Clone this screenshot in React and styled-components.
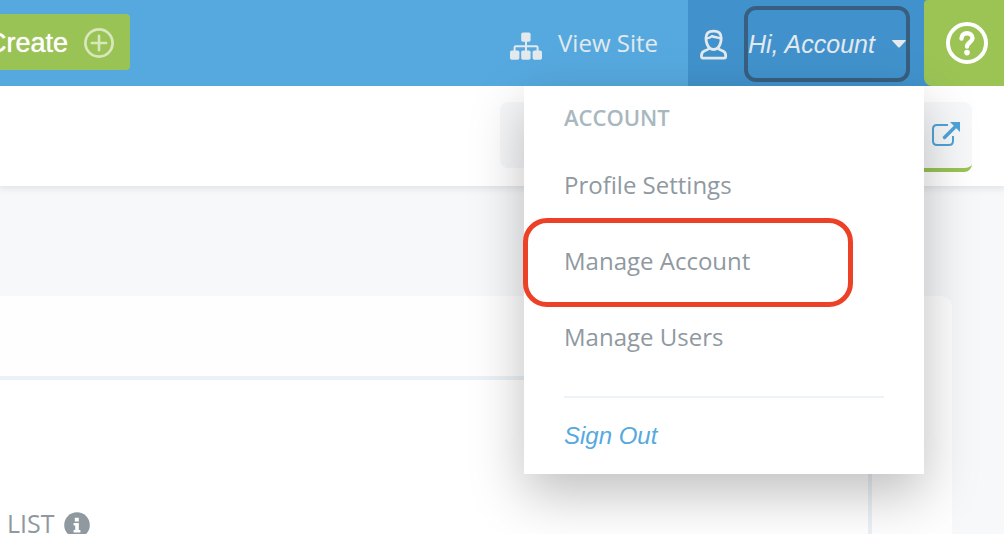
import styled from "styled-components";
import { createGlobalStyle } from "styled-components";


const GlobalStyle = createGlobalStyle`
   * {
    box-sizing: border-box;
   }

   body {
   background: #F7F8FA;
   margin: 0;
   overflow: hidden;
   font-family: 'Open Sans', sans-serif;
   font-size: 24px;
   color: #8F999F;
   }

   button {
   border: none;
   cursor: pointer;
   font: inherit;
   }

   a {
   text-decoration: none;
   color: inherit;
   }

   svg {
   display: block;
   flex: none;
   }
`;

const Page = styled.div`
   display: flex;
   flex-direction: column;
   height: 100vh;
`;

const Header = styled.header`
   display: flex;
   height: 86px;
   flex: none;
   background: #56A9DF;
`;

const CreateSlot = styled.div`
   display: flex;
   align-items: center;
   justify-content: flex-end;
   width: 130px;
   height: 84px;
   overflow: hidden;
`;

const CreateButton = styled.button`
   display: flex;
   align-items: center;
   gap: 16px;
   flex: none;
   height: 56px;
   padding: 2px 16px 0;
   border-radius: 4px;
   background: #9AC356;
   color: #FFF;
   font-family: 'Liberation Sans', Arial, sans-serif;
   font-size: 27px;
   text-shadow: 0 0 1px #FFF;
`;

const HeaderRight = styled.div`
   display: flex;
   margin-left: auto;
`;

const SiteLink = styled.a`
   display: flex;
   align-items: center;
   gap: 16px;
   padding: 0 30px 0 20px;
   color: #E3E9ED;
`;

const SiteText = styled.span`
   padding-bottom: 2px;
`;

const Account = styled.div`
   display: flex;
   align-items: center;
   gap: 16px;
   position: relative;
   width: 236px;
   padding: 2px 0 0 12px;
   background: #4192CC;
   color: #E3E9ED;
`;

const AccountButton = styled.button`
   display: flex;
   align-items: center;
   justify-content: space-between;
   width: 166px;
   height: 76px;
   padding: 0;
   border: 4px solid #385F80;
   border-radius: 12px;
   background: transparent;
   color: inherit;
   font-family: 'Liberation Sans', Arial, sans-serif;
   font-size: 25px;
   font-style: italic;
`;

const HelpSlot = styled.div`
   background: #4192CC;
`;

const HelpButton = styled.button`
   display: flex;
   align-items: center;
   justify-content: center;
   width: 80px;
   height: 86px;
   padding: 0 0 0 6px;
   border-radius: 4px 0 0 8px;
   background: #9BC455;
`;

const Menu = styled.nav`
   position: absolute;
   top: 86px;
   right: 0;
   z-index: 2;
   width: 400px;
   padding: 13px 40px 19px;
   background: #FFF;
   color: #8F999F;
   box-shadow: 0 20px 50px rgba(0, 0, 0, 0.25);
`;

const MenuTitle = styled.h2`
   margin: 0;
   padding-bottom: 12px;
   font-size: 22px;
   font-weight: 600;
   line-height: 36px;
   color: #A9B7BE;
`;

const MenuList = styled.ul`
   margin: 0;
   padding: 0 0 21px;
   list-style: none;
   border-bottom: 2px solid #EEF3F7;
`;

const MenuItem = styled.li`
   position: relative;
   line-height: 76px;
`;

const Highlight = styled.span`
   position: absolute;
   top: -5px;
   left: -41px;
   width: 330px;
   height: 89px;
   border: 5px solid #EC4127;
   border-radius: 24px;
   pointer-events: none;
`;

const SignOut = styled.a`
   display: block;
   line-height: 38px;
   margin-top: 19px;
   color: #56A9DF;
   font-family: 'Liberation Sans', Arial, sans-serif;
   font-size: 24px;
   font-style: italic;
`;

const TabBar = styled.div`
   display: flex;
   justify-content: flex-end;
   align-items: flex-start;
   height: 100px;
   flex: none;
   padding: 16px 32px;
   background: #FFF;
   box-shadow: 0 0 8px 2px rgba(0, 0, 0, 0.1);
   clip-path: inset(0 0 -12px 0);
`;

const Tab = styled.button`
   display: flex;
   align-items: center;
   justify-content: flex-end;
   width: ${(props) => (props.$wide ? "400px" : "72px")};
   height: ${(props) => (props.$active ? "70px" : "66px")};
   padding: 0 12px 2px;
   border-radius: ${(props) => (props.$active ? "0 8px 8px 0" : "8px 0 0 8px")};
   border-bottom: ${(props) => (props.$active ? "4px solid #9AC356" : "none")};
   background: #F7F8FA;
`;

const Panel = styled.main`
   display: flex;
   flex: 1;
   margin: 110px 52px 0 0;
   border-radius: 0 12px 0 0;
   background: #FEFEFE;
`;

const PanelBody = styled.section`
   flex: 1;
   border-right: 4px solid #EBF1F6;
   background: #FFF;
`;

const PanelTop = styled.div`
   height: 84px;
   border-bottom: 4px solid #EBF1F6;
   background: #FEFEFE;
`;

const Label = styled.div`
   display: flex;
   align-items: center;
   gap: 7px;
   padding: 125px 0 0 7px;
   font-size: 25px;
   line-height: 36px;
`;

const InfoMark = styled.span`
   padding: 4px 0 0 2px;
`;

const PanelSide = styled.aside`
   width: 80px;
`;

const PlusIcon = () => (
   <svg width="30" height="30" viewBox="0 0 30 30" fill="none" stroke="#D8E7BC" strokeLinecap="round" aria-hidden="true">
      <circle cx="15" cy="15" r="13.6" strokeWidth="2.7" />
      <path d="M15 7.8v14.4M7.8 15h14.4" strokeWidth="2.6" />
   </svg>
);

const SitemapIcon = () => (
   <svg width="32" height="28" viewBox="0 -1 32 28" overflow="visible" fill="currentColor" aria-hidden="true">
      <rect x="11.2" y="2.500" width="9.4" height="9.2" rx="1.8" />
      <rect x="0" y="20.500" width="9.4" height="9.2" rx="1.8" />
      <rect x="11.2" y="20.500" width="9.4" height="9.2" rx="1.8" />
      <rect x="22.6" y="20.500" width="9.4" height="9.2" rx="1.8" />
      <path d="M16 11v10M4.6 21v-3.6q0-1.2 1.2-1.2h20.600q1.2 0 1.2 1.2V21" fill="none" stroke="currentColor" strokeWidth="2" />
   </svg>
);

const UserIcon = () => (
   <svg width="28" height="30" viewBox="0 0 28 30" overflow="visible" fill="none" stroke="currentColor" strokeWidth="2.8" strokeLinejoin="round" aria-hidden="true">
      <path d="M9.4 19C7.2 16.4 6 12.6 6 9C6 4.400 8.800 2.200 13.600 2.200C18.400 2.200 21.200 4.400 21.200 9C21.200 12.600 20 16.400 17.800 19" />
      <path d="M9.400 18.600C9.200 20 7.400 20.800 4.800 21.800C2.400 22.700 1.500 24.200 1.500 26.400V27.600Q1.500 29.200 3 29.200H24.200Q25.700 29.200 25.700 27.600V26.400C25.700 24.200 24.800 22.700 22.400 21.800C19.800 20.800 18 20 17.800 18.600" />
      <path d="M9.400 19Q13.600 22 17.800 19" />
      <path d="M6.200 9.400C8.800 9.200 10.400 8.600 12 7C14.400 8.800 17.800 7.600 21 9.800" strokeWidth="2.4" />
   </svg>
);

const CaretIcon = () => (
   <svg width="14" height="8" viewBox="0 0 14 8" fill="currentColor" aria-hidden="true">
      <path d="M.6 0h12.800q.8.300.200 1L7.800 7.200q-.8.700-1.600 0L.4 1Q-.2.300.6 0z" />
   </svg>
);

const HelpIcon = () => (
   <svg width="42" height="42" viewBox="0 0 42 42" fill="none" stroke="#FFF" aria-hidden="true">
      <circle cx="21" cy="21" r="19" strokeWidth="4" />
      <path d="M15.500 16.500C15.500 13 17.800 11.200 21 11.200C24.200 11.200 26.500 13.300 26.500 16.200C26.500 20.200 21 20.200 21 24.600" strokeWidth="4.400" strokeLinecap="round" />
      <circle cx="21" cy="30.600" r="2.800" fill="#FFF" stroke="none" />
   </svg>
);

const ExternalIcon = () => (
   <svg width="28" height="24" viewBox="0 0 28 24" fill="none" stroke="#4FA3D9" aria-hidden="true">
      <path d="M16 3H5Q1 3 1 7v12q0 4 4 4h12q4 0 4-4v-5" strokeWidth="2" />
      <path d="M12.500 15.500L24 4" strokeWidth="3.400" strokeLinecap="round" />
      <path d="M18 0h10v10z" fill="#4FA3D9" stroke="none" />
   </svg>
);

const InfoIcon = () => (
   <svg width="26" height="26" viewBox="0 0 26 26" aria-hidden="true">
      <circle cx="13" cy="13" r="12.800" fill="#8F999F" />
      <path d="M10.800 5.800h4v3.600h-4zM9.600 11h5.200v7h1.600v2.400H9.600V18h1.600v-4.600H9.600z" fill="#FFF" />
   </svg>
);


const App = () => {
   return (
    <Page>
    <GlobalStyle />
    <Header>
       <CreateSlot>
          <CreateButton type="button">Create <PlusIcon /></CreateButton>
       </CreateSlot>
       <HeaderRight>
          <SiteLink href="#site"><SitemapIcon /> <SiteText>View Site</SiteText></SiteLink>
          <Account>
             <UserIcon />
             <AccountButton type="button" aria-expanded="true">
                Hi, Account <CaretIcon />
             </AccountButton>
             <Menu>
                <MenuTitle>ACCOUNT</MenuTitle>
                <MenuList>
                   <MenuItem><a href="#profile">Profile Settings</a></MenuItem>
                   <MenuItem>
                      <a href="#account">Manage Account</a>
                      <Highlight />
                   </MenuItem>
                   <MenuItem><a href="#users">Manage Users</a></MenuItem>
                </MenuList>
                <SignOut href="#signout">Sign Out</SignOut>
             </Menu>
          </Account>
          <HelpSlot>
             <HelpButton type="button" aria-label="Help"><HelpIcon /></HelpButton>
          </HelpSlot>
       </HeaderRight>
    </Header>

    <TabBar>
       <Tab type="button" $wide aria-label="Edit" />
       <Tab type="button" $active aria-label="Open in new window"><ExternalIcon /></Tab>
    </TabBar>

    <Panel>
       <PanelBody>
          <PanelTop />
          <Label>LIST <InfoMark><InfoIcon /></InfoMark></Label>
       </PanelBody>
       <PanelSide />
    </Panel>
    </Page>
   );
};

export default App;
